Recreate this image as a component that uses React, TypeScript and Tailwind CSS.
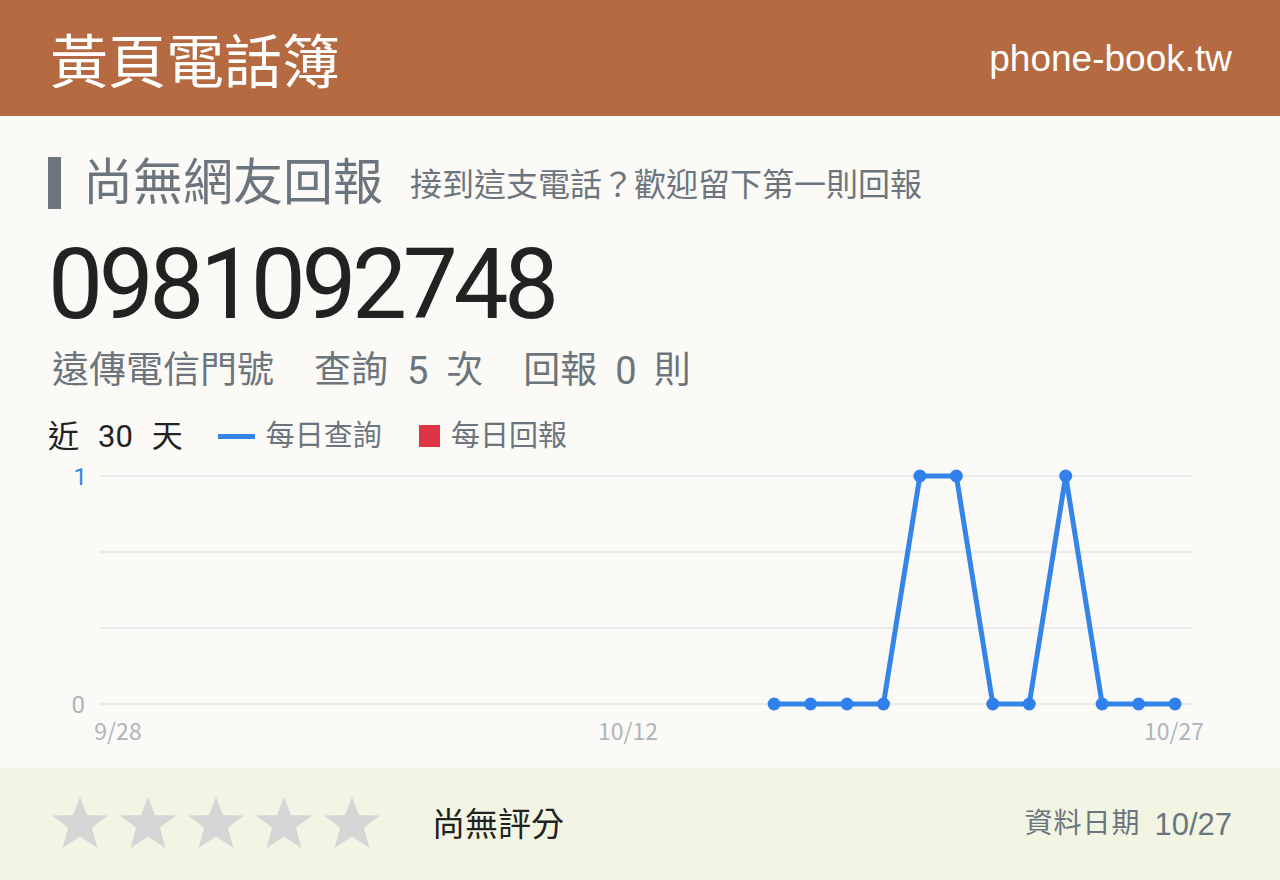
import React from "react";

const CJK = "font-['Roboto','Noto_Sans_CJK_TC',sans-serif]";

// 9/28 .. 10/27, only the last 12 days have data
const series: (number | null)[] = [
  ...Array(18).fill(null),
  0, 0, 0, 0, 1, 1, 0, 0, 1, 0, 0, 0,
];

const Star = () => (
  <svg viewBox="0 0 56 56" className="w-[56px] h-[56px]">
    <polygon
      points="28,1 35,19 56,19.6 40,31.4 45.4,52 28,40.6 10.6,52 16,31.4 0,19.6 21,19"
      fill="#d6d6d6"
    />
  </svg>
);

const Chart = () => {
  const x0 = 70;
  const step = 36.45;
  const yTop = 16;
  const yBottom = 244;
  const pts = series
    .map((v, i) => (v === null ? null : { x: x0 + i * step, y: v ? yTop : yBottom }))
    .filter((p): p is { x: number; y: number } => p !== null);
  const grid = [16, 92, 168, 244];

  return (
    <svg width={1184} height={290} className="block">
      {grid.map((y) => (
        <line key={y} x1={52} x2={1145} y1={y} y2={y} stroke="#e8eaee" strokeWidth={2} />
      ))}
      <text x={39} y={25} textAnchor="end" fill="#3584e8" fontSize={24} fontFamily="Roboto, sans-serif">1</text>
      <text x={37} y={253} textAnchor="end" fill="#adb5bd" fontSize={24} fontFamily="Roboto, sans-serif">0</text>
      {[
        { x: 70, t: "9/28" },
        { x: 580, t: "10/12" },
        { x: 1126, t: "10/27" },
      ].map((l) => (
        <text
          key={l.t}
          x={l.x}
          y={280}
          textAnchor="middle"
          fill="#adb5bd"
          fontSize={23}
          fontFamily="'Noto Sans CJK TC', sans-serif"
        >
          {l.t}
        </text>
      ))}
      <polyline
        points={pts.map((p) => `${p.x},${p.y}`).join(" ")}
        fill="none"
        stroke="#3584e8"
        strokeWidth={5}
        strokeLinejoin="round"
      />
      {pts.map((p, i) => (
        <circle key={i} cx={p.x} cy={p.y} r={6.5} fill="#2f80ea" />
      ))}
    </svg>
  );
};

export default function App() {
  return (
    <div className={`w-[1280px] h-[880px] flex flex-col bg-[#fbfaf6] ${CJK}`}>
      {/* Header */}
      <header className="h-[116px] shrink-0 bg-[#b56a41] flex items-center justify-between pl-[50px] pr-[48px]">
        <h1 className="text-white text-[58px] leading-none font-['Noto_Sans_CJK_TC',sans-serif]">黃頁電話簿</h1>
        <span className="text-white text-[37px] leading-none font-['Liberation_Sans',sans-serif]">phone-book.tw</span>
      </header>

      {/* Main */}
      <main className="flex-1 px-[48px] pt-[41px]">
        <div className="h-[52px] flex items-center">
          <div className="w-[13px] h-[52px] bg-[#6c757d]" />
          <h2 className="ml-[22px] text-[50px] leading-none text-[#6c757d]">尚無網友回報</h2>
          <p className="ml-[27px] mt-[4px] text-[32px] leading-none text-[#6c757d]">接到這支電話？歡迎留下第一則回報</p>
        </div>

        <div className="mt-[28px] h-[96px] text-[98px] leading-[96px] text-[#222222] tracking-[-4.4px] font-['Roboto',sans-serif]">
          0981092748
        </div>

        <div className="mt-[19px] h-[37px] flex items-center text-[37px] leading-none text-[#6c757d] pl-[4px]">
          <span>遠傳電信門號</span>
          <span className="ml-[40px]">查詢</span>
          <span className="ml-[19px] text-[38px]">5</span>
          <span className="ml-[18px]">次</span>
          <span className="ml-[40px]">回報</span>
          <span className="ml-[18px] text-[38px]">0</span>
          <span className="ml-[17px]">則</span>
        </div>

        <div className="mt-[31px] h-[32px] flex items-center">
          <span className="text-[31px] leading-none text-[#222222]">近</span>
          <span className="ml-[19px] text-[31px] leading-none text-[#222222]">30</span>
          <span className="ml-[19px] text-[31px] leading-none text-[#222222]">天</span>
          <span className="ml-[35px] w-[37px] h-[5px] bg-[#3584e8]" />
          <span className="ml-[11px] text-[29px] leading-none text-[#6c757d]">每日查詢</span>
          <span className="ml-[37px] w-[21px] h-[22px] bg-[#dc3545]" />
          <span className="ml-[11px] text-[29px] leading-none text-[#6c757d]">每日回報</span>
        </div>

        <div className="mt-[8px]">
          <Chart />
        </div>
      </main>

      {/* Footer */}
      <footer className="h-[112px] shrink-0 bg-[#f2f5e3] flex items-center justify-between pl-[52px] pr-[48px]">
        <div className="flex items-center">
          <div className="flex gap-[12px]">
            <Star />
            <Star />
            <Star />
            <Star />
            <Star />
          </div>
          <span className="ml-[52px] text-[33px] leading-none text-[#222222]">尚無評分</span>
        </div>
        <div className="flex items-center text-[#6c757d]">
          <span className="text-[28px] leading-none tracking-[1px]">資料日期</span>
          <span className="ml-[14px] text-[31px] leading-none font-['Liberation_Sans',sans-serif]">10/27</span>
        </div>
      </footer>
    </div>
  );
}
